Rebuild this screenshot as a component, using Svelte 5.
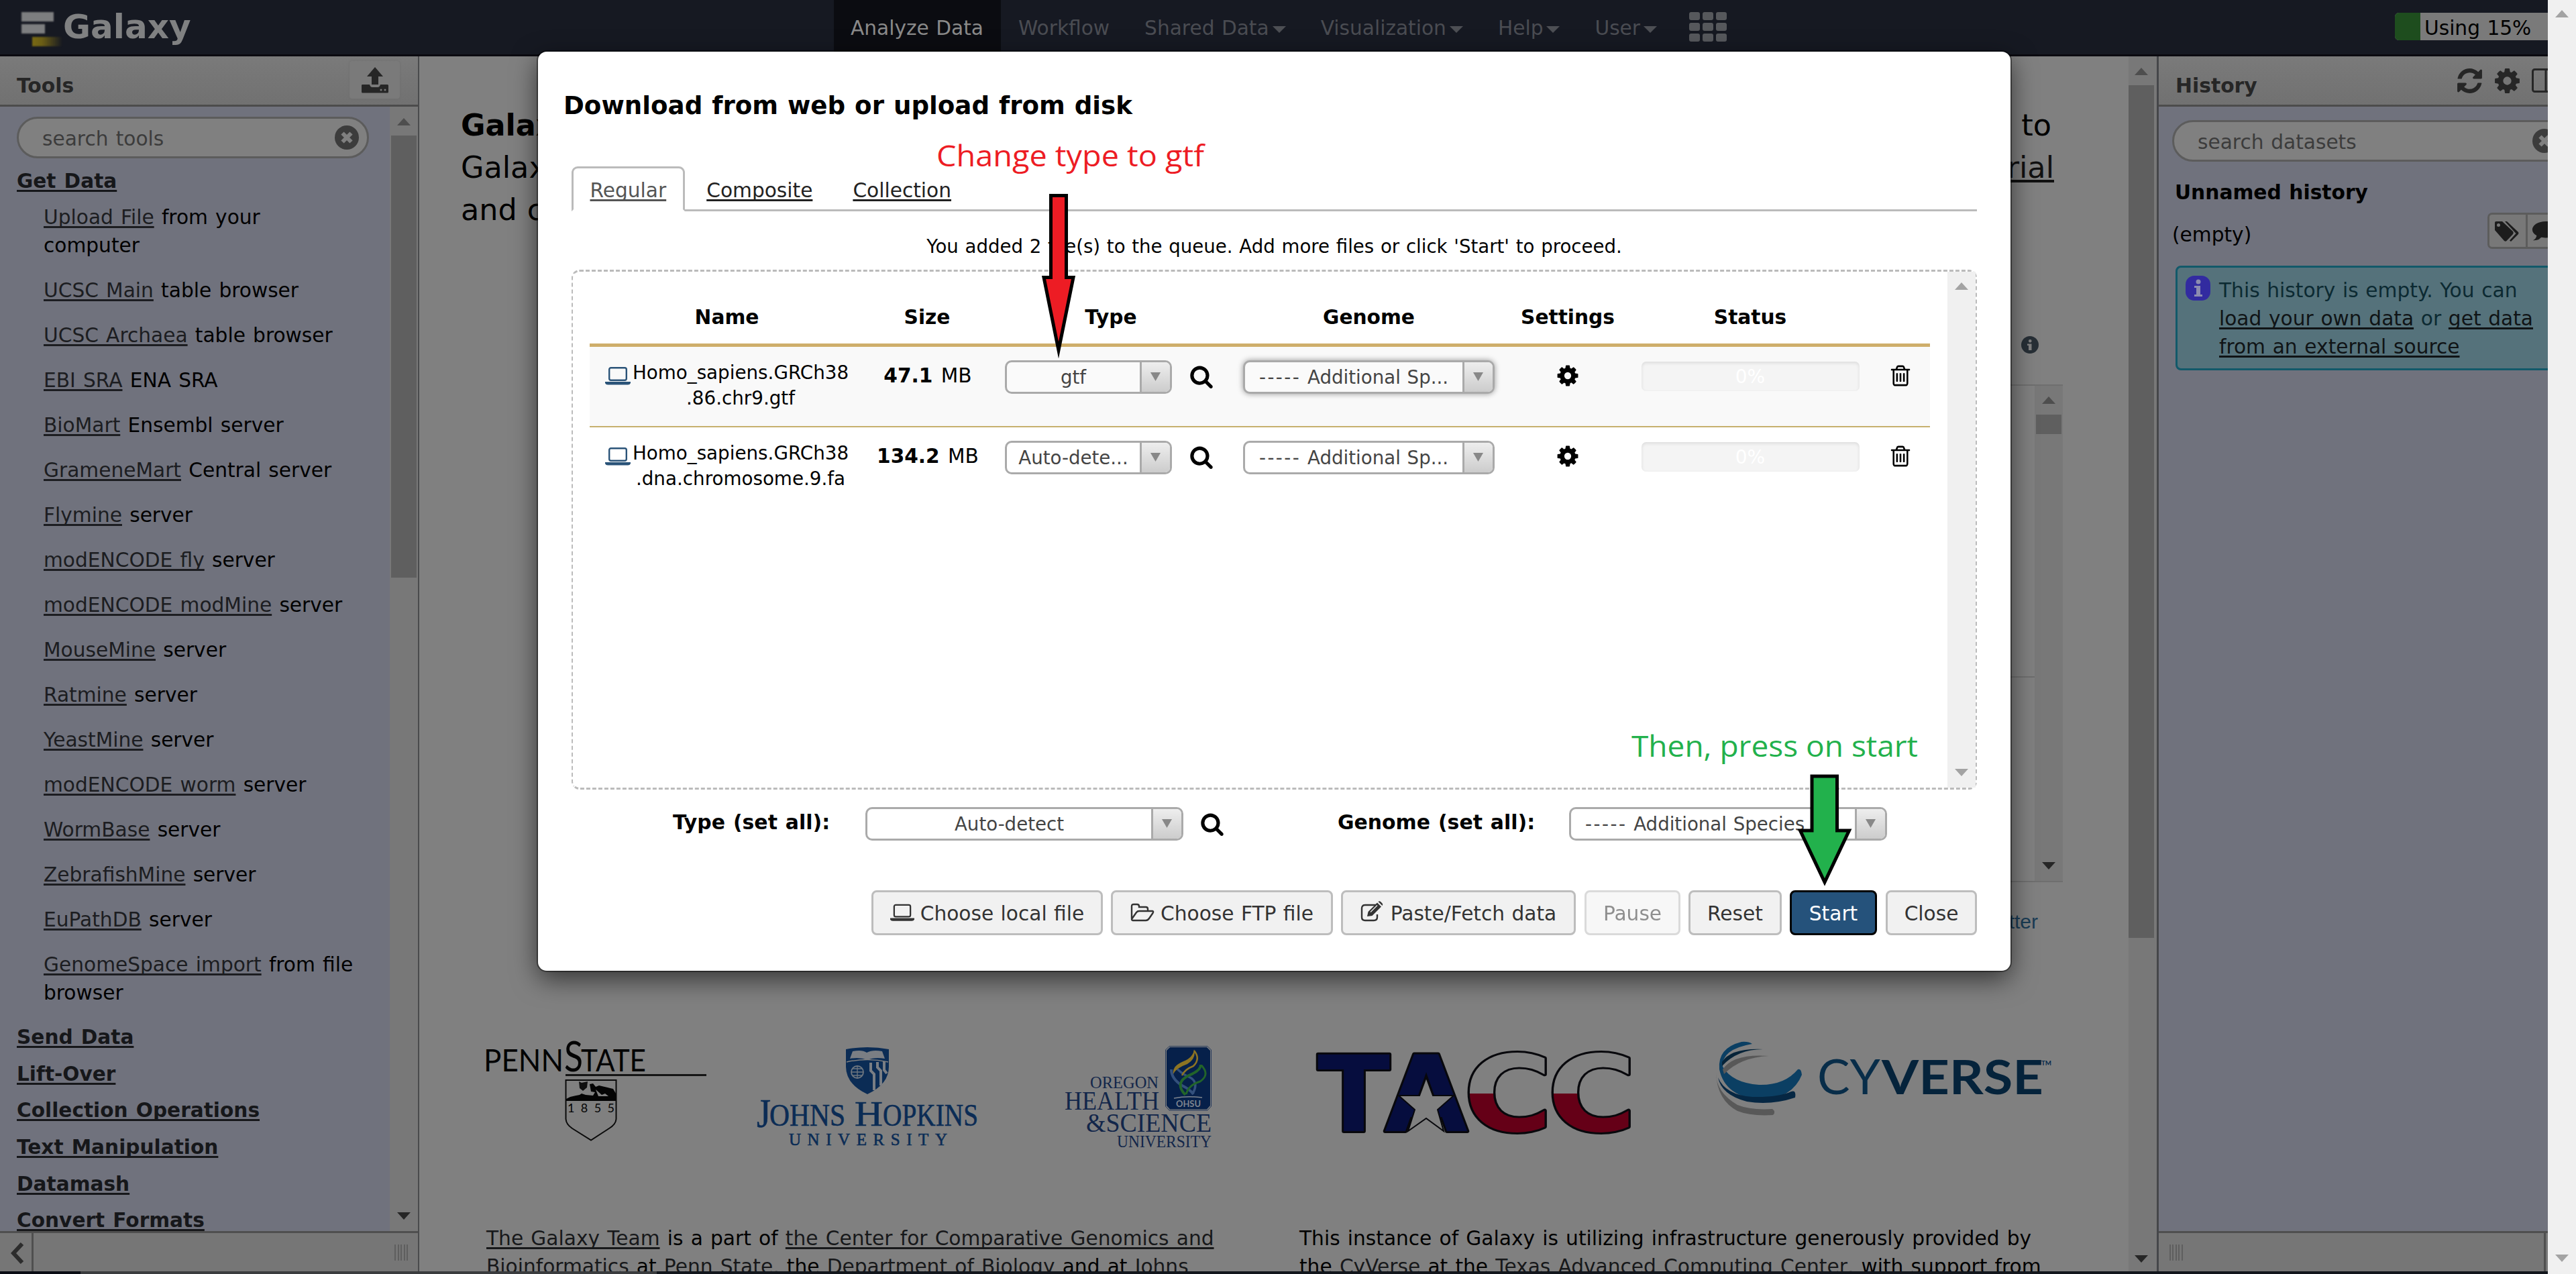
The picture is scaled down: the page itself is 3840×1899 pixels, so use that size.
<script>
  const tools = [
    ['Upload File', 'from your computer'],
    ['UCSC Main', 'table browser'],
    ['UCSC Archaea', 'table browser'],
    ['EBI SRA', 'ENA SRA'],
    ['BioMart', 'Ensembl server'],
    ['GrameneMart', 'Central server'],
    ['Flymine', 'server'],
    ['modENCODE fly', 'server'],
    ['modENCODE modMine', 'server'],
    ['MouseMine', 'server'],
    ['Ratmine', 'server'],
    ['YeastMine', 'server'],
    ['modENCODE worm', 'server'],
    ['WormBase', 'server'],
    ['ZebrafishMine', 'server'],
    ['EuPathDB', 'server'],
    ['GenomeSpace import', 'from file browser'],
  ];
  const sections = ['Send Data', 'Lift-Over', 'Collection Operations', 'Text Manipulation', 'Datamash', 'Convert Formats'];
  const menus = ['Shared Data', 'Visualization', 'Help', 'User'];
  const files = [
    { lines: ['Homo_sapiens.GRCh38', '.86.chr9.gtf'], size: '47.1', type: 'gtf', active: true },
    { lines: ['Homo_sapiens.GRCh38', '.dna.chromosome.9.fa'], size: '134.2', type: 'Auto-dete...', active: false },
  ];
  const paths = {
    search: 'M1216 832q0-185-131.5-316.5t-316.5-131.5-316.5 131.5-131.5 316.5 131.5 316.5 316.5 131.5 316.5-131.5 131.5-316.5zm512 832q0 52-38 90t-90 38q-54 0-90-38l-343-342q-179 124-399 124-143 0-273.5-55.5t-225-150-150-225-55.5-273.5 55.5-273.5 150-225 225-150 273.5-55.5 273.5 55.5 225 150 150 225 55.5 273.5q0 220-124 399l343 343q37 37 37 90z',
    cog: 'M1152 896q0-106-75-181t-181-75-181 75-75 181 75 181 181 75 181-75 75-181zm512-109v222q0 12-8 23t-20 13l-185 28q-19 54-39 91 35 50 107 138 10 12 10 25t-9 23q-27 37-99 108t-94 71q-12 0-26-9l-138-108q-44 23-91 38-16 136-29 186-7 28-36 28h-222q-14 0-24.5-8.5t-11.5-21.5l-28-184q-49-16-90-37l-141 107q-10 9-25 9-14 0-25-11-126-114-165-168-7-10-7-23 0-12 8-23 15-21 51-66.5t54-70.5q-27-50-41-99l-183-27q-13-2-21-12.5t-8-23.5v-222q0-12 8-23t19-13l186-28q14-46 39-92-40-57-107-138-10-12-10-24 0-10 9-23 26-36 98.5-107.5t94.500-71.500q13 0 26 10l138 107q44-23 91-38 16-136 29-186 7-28 36-28h222q14 0 24.500 8.500t11.500 21.500l28 184q49 16 90 37l142-107q9-9 24-9 13 0 25 10 129 119 165 170 7 8 7 22 0 12-8 23-15 21-51 66.500t-54 70.500q26 50 41 98l183 28q13 2 21 12.500t8 23.500z',
    trash: 'M704 736v576q0 14-9 23t-23 9h-64q-14 0-23-9t-9-23v-576q0-14 9-23t23-9h64q14 0 23 9t9 23zm256 0v576q0 14-9 23t-23 9h-64q-14 0-23-9t-9-23v-576q0-14 9-23t23-9h64q14 0 23 9t9 23zm256 0v576q0 14-9 23t-23 9h-64q-14 0-23-9t-9-23v-576q0-14 9-23t23-9h64q14 0 23 9t9 23zm128 724v-948h-896v948q0 22 7 40.500t14.500 27 10.500 8.500h832q3 0 10.500-8.500t14.500-27 7-40.500zm-672-1076h448l-48-117q-7-9-17-11h-317q-10 2-17 11zm928 32v64q0 14-9 23t-23 9h-96v948q0 83-47 143.500t-113 60.500h-832q-66 0-113-58.500t-47-141.500v-952h-96q-14 0-23-9t-9-23v-64q0-14 9-23t23-9h309l70-167q15-37 54-63t79-26h320q40 0 79 26t54 63l70 167h309q14 0 23 9t9 23z',
    refresh: 'M1639 1056q0 5-1 7-64 268-268 434.500t-478 166.500q-146 0-282.500-55t-243.500-157l-129 129q-19 19-45 19t-45-19-19-45v-448q0-26 19-45t45-19h448q26 0 45 19t19 45-19 45l-137 137q71 66 161 102t187 36q134 0 250-65t186-179q11-17 53-117 8-23 30-23h192q13 0 22.500 9.500t9.500 22.500zm25-800v448q0 26-19 45t-45 19h-448q-26 0-45-19t-19-45 19-45l138-138q-148-137-349-137-134 0-250 65t-186 179q-11 17-53 117-8 23-30 23h-199q-13 0-22.500-9.500t-9.500-22.500v-7q65-268 270-434.500t480-166.500q146 0 284 55.500t245 156.500l130-129q19-19 45-19t45 19 19 45z',
  };
</script>

{#snippet icon(name)}
  <svg class="fa {name}" viewBox="0 0 1792 1792"><path d={paths[name]} fill="currentColor" /></svg>
{/snippet}

{#snippet laptop()}
  <svg class="laptop" viewBox="0 0 38 28">
    <rect x="6.2" y="2.2" width="25.600" height="18.600" rx="2.500" fill="none" stroke="currentColor" stroke-width="2.400" />
    <path d="M0 23H38V25Q37 27.500 34 27.500H4Q1 27.500 0 25Z" fill="currentColor" />
  </svg>
{/snippet}

{#snippet clear()}
  <svg class="clear" viewBox="0 0 36 36">
    <circle cx="18" cy="18" r="18" fill="#3c3c3c" />
    <path d="M11.500 11.500L24.500 24.500M24.500 11.500L11.500 24.500" stroke="#808080" stroke-width="6" />
  </svg>
{/snippet}

{#snippet select(text, cls, dashes = '')}
  <div class="select {cls}">
    <span class="value">{#if dashes}<span class="dashes">{dashes}</span>{' '}{/if}{text}</span>
    <span class="drop"><svg viewBox="0 0 15 13"><path d="M0 0H15L7.500 13Z" fill="#888" /></svg></span>
  </div>
{/snippet}

{#snippet arrow(cls)}
  <svg class="arrow {cls}" viewBox="0 0 20 11"><path d="M0 11L10 0L20 11Z" fill="currentColor" /></svg>
{/snippet}

<div class="page">
  <div class="app">
    <header>
      <div class="brand">
        <svg class="mark" viewBox="0 0 66 54">
          <defs><linearGradient id="gold"><stop offset="0" stop-color="#7a6a14" /><stop offset=".35" stop-color="#6a5d16" /><stop offset="1" stop-color="#6a5d16" stop-opacity="0" /></linearGradient></defs>
          <rect x="2" y="2" width="48" height="14" fill="#7d7e80" />
          <rect x="2" y="20" width="35" height="14" fill="#7d7e80" />
          <rect x="18" y="39" width="45" height="14" fill="url(#gold)" />
        </svg>
        <b>Galaxy</b>
      </div>
      <nav>
        <span class="item on">Analyze Data</span>
        <span class="item">Workflow</span>
        {#each menus as m}
          <span class="item">{m}<i class="caret"></i></span>
        {/each}
        <span class="dots">{#each Array(9) as _}<i></i>{/each}</span>
      </nav>
      <div class="quota"><i></i><span>Using 15%</span></div>
    </header>

    <div class="main">
      <aside class="left">
        <div class="phead">
          <b>Tools</b>
          <span class="up">
            <svg viewBox="0 0 40 39"><path d="M20 0L32 14H25V26H15V14H8Z" fill="#262626" /><path d="M0 27Q0 26 1.500 26H12Q13 30 16 30H24Q27 30 28 26H38.500Q40 26 40 27.500V37Q40 38.500 38.500 38.500H1.500Q0 38.500 0 37Z" fill="#262626" /><circle cx="29" cy="34" r="1.500" fill="#7a7a7a" /><circle cx="35" cy="34" r="1.500" fill="#7a7a7a" /></svg>
          </span>
        </div>
        <div class="pbody">
          <div class="tools">
            <div class="field"><span>search tools</span>{@render clear()}</div>
            <b class="sec"><u>Get Data</u></b>
            <div class="list">
              {#each tools as [name, rest]}
                <p><u>{name}</u> {rest}</p>
              {/each}
            </div>
            {#each sections as s}
              <b class="sec"><u>{s}</u></b>
            {/each}
          </div>
          <div class="bar side">{@render arrow('u')}<i></i>{@render arrow('d')}</div>
        </div>
        <div class="pfoot">
          <span class="chev"><svg viewBox="0 0 20 32"><path d="M17 2L4 16L17 30" fill="none" stroke="#2c2c2c" stroke-width="6" /></svg></span>
          <span class="grip"></span>
        </div>
      </aside>

      <section class="center">
        <div class="content">
          <div class="intro">
            <p><span><b>Galaxy</b> is an open source, web-based platform for data intensive biomedical research. If you are new</span><span>to</span></p>
            <p><span>Galaxy start here or consult our help resources. You can install your own Galaxy by following the</span><u>tutorial</u></p>
            <p><span>and choose from thousands of tools from the Tool Shed.</span></p>
          </div>
          <div class="feed">
            <div class="feedhead">
              <svg viewBox="0 0 26 26"><circle cx="13" cy="13" r="13" fill="#272f36" /><rect x="11" y="5" width="4.500" height="4.500" rx="2" fill="#808080" /><path d="M9 11.500H15.500V21H11V14H9Z" fill="#808080" /></svg>
            </div>
            <div class="feedbox">
              <div class="posts"><div></div><div></div></div>
              <div class="bar inner">{@render arrow('u')}<i></i>{@render arrow('d')}</div>
            </div>
            <div class="feedfoot">View on Twitter</div>
          </div>
          <div class="logos">
            <svg class="psu" viewBox="725 1545 335 175">
              <g font-family="Lato, sans-serif" fill="#040404">
                <text x="721" y="1597" font-size="47" textLength="119" lengthAdjust="spacingAndGlyphs">PENN</text>
                <text x="841" y="1597" font-size="61" textLength="28" lengthAdjust="spacingAndGlyphs">S</text>
                <text x="866" y="1597" font-size="47" textLength="97" lengthAdjust="spacingAndGlyphs">TATE</text>
                <text x="846" y="1658" font-size="18" textLength="70">1855</text>
              </g>
              <path d="M843 1602.500H1053" stroke="#151515" stroke-width="3" />
              <path d="M843.500 1610H918.500V1668Q918 1676 908 1682L881 1699.500L853 1682Q844 1676 843.500 1668Z" fill="none" stroke="#0a0a0a" stroke-width="2" />
              <path d="M844 1641V1638L850 1635Q858 1633 864 1632L867 1630L873 1632L884 1633L887 1628L881 1627L879 1616L884 1615L888 1620L893 1618Q906 1621 914 1623L918 1630V1641Z" fill="#040404" />
              <path d="M863 1612L867 1614L876 1612L875 1621L869 1626L864 1622Z" fill="#101010" />
              <path d="M888 1624L897 1632L902 1630L907 1634L892 1634Z" fill="#808080" />
            </svg>
            <svg class="jhu" viewBox="1125 1545 335 175">
              <path d="M1261 1564Q1293 1558 1325 1564V1590Q1325 1616 1293 1631Q1261 1616 1261 1590Z" fill="#0b2c55" />
              <path d="M1271 1567Q1285 1564 1292 1569Q1301 1564 1315 1567L1319 1578Q1304 1575 1293 1580Q1281 1575 1267 1578Z" fill="#7a7e84" />
              <path d="M1262 1583Q1293 1576 1324 1583" fill="none" stroke="#808080" stroke-width="1.500" />
              <circle cx="1278" cy="1598" r="9" fill="none" stroke="#6f7780" stroke-width="1.800" />
              <path d="M1278 1589V1607M1269 1598H1287M1271 1593H1285M1271 1603H1285" stroke="#6f7780" stroke-width="1.300" />
              <path d="M1298 1584V1596L1303 1601V1625M1308 1583V1591L1313 1596V1618M1318 1582V1595L1322 1600" fill="none" stroke="#7a7e84" stroke-width="4" />
              <g font-family="Liberation Serif, serif" fill="#0b2c55" stroke="#0b2c55" stroke-width=".6">
                <text x="1128" y="1680" font-size="62" textLength="21" lengthAdjust="spacingAndGlyphs">J</text>
                <text x="1147" y="1678" font-size="46" textLength="113" lengthAdjust="spacingAndGlyphs">OHNS</text>
                <text x="1274" y="1678" font-size="53" textLength="42" lengthAdjust="spacingAndGlyphs">H</text>
                <text x="1316" y="1678" font-size="46" textLength="142" lengthAdjust="spacingAndGlyphs">OPKINS</text>
                <text x="1176" y="1707" font-size="25" textLength="236">UNIVERSITY</text>
              </g>
            </svg>
            <svg class="ohsu" viewBox="1585 1545 225 175">
              <path d="M1743 1559.500H1800L1805.500 1565V1649L1800 1655H1743L1737.500 1649V1565Z" fill="none" stroke="#25395c" stroke-width="1" />
              <path d="M1744 1561H1799L1804 1566V1648L1799 1653.500H1744L1739 1648V1566Z" fill="#06204a" />
              <path d="M1746 1594Q1746 1608 1762 1618Q1774 1624 1779 1631" fill="none" stroke="#33507c" stroke-width="4" />
              <path d="M1752 1590Q1760 1600 1772 1605Q1788 1612 1778 1630" fill="none" stroke="#33507c" stroke-width="3.500" />
              <path d="M1780 1564Q1779 1576 1764 1582Q1747 1589 1749 1601Q1753 1592 1770 1586Q1784 1577 1780 1564Z" fill="#8d7423" />
              <path d="M1780 1566Q1790 1578 1779 1589Q1766 1594 1762 1603" fill="none" stroke="#8d7423" stroke-width="2.500" />
              <path d="M1790 1587Q1790 1596 1772 1603Q1750 1614 1767 1632" fill="none" stroke="#22642a" stroke-width="4" />
              <path d="M1791 1588Q1804 1602 1789 1612Q1772 1617 1768 1631" fill="none" stroke="#22642a" stroke-width="3" />
              <path d="M1750 1637Q1770 1633 1792 1636" fill="none" stroke="#7e858f" stroke-width="1.500" />
              <text x="1753" y="1650" font-family="Lato, sans-serif" font-weight="bold" font-size="14" textLength="37" lengthAdjust="spacingAndGlyphs" fill="#7e858f">OHSU</text>
              <g font-family="Liberation Serif, serif" fill="#12264a">
                <text x="1625" y="1622" font-size="26" textLength="102" lengthAdjust="spacingAndGlyphs">OREGON</text>
                <text x="1587" y="1654" font-size="40" textLength="141" lengthAdjust="spacingAndGlyphs">HEALTH</text>
                <text x="1619" y="1687" font-size="40" textLength="187" lengthAdjust="spacingAndGlyphs">&amp;SCIENCE</text>
                <text x="1665" y="1709.500" font-size="25" textLength="141" lengthAdjust="spacingAndGlyphs">UNIVERSITY</text>
              </g>
            </svg>
            <svg class="tacc" viewBox="1955 1545 480 175">
              <defs><linearGradient id="flag" gradientUnits="userSpaceOnUse" x1="0" y1="1570" x2="0" y2="1690"><stop offset=".5" stop-color="#808080" /><stop offset=".5" stop-color="#650017" /></linearGradient></defs>
              <g font-family="DejaVu Sans, sans-serif" font-weight="bold" font-size="157" stroke="#08080c" stroke-width="6" paint-order="stroke" stroke-linejoin="round">
                <text x="1964" y="1686" textLength="108" lengthAdjust="spacingAndGlyphs" fill="#060d3e">T</text>
                <text x="2064" y="1686" textLength="124" lengthAdjust="spacingAndGlyphs" fill="#060d3e">A</text>
                <text x="2182" y="1686" textLength="132" lengthAdjust="spacingAndGlyphs" fill="url(#flag)">C</text>
                <text x="2307" y="1686" textLength="132" lengthAdjust="spacingAndGlyphs" fill="url(#flag)">C</text>
              </g>
              <path d="M2126 1606L2136 1633L2167 1633L2143 1654L2152 1686L2126 1667L2099 1686L2109 1654L2085 1633L2116 1633Z" fill="#808080" stroke="#08080c" stroke-width="2" />
            </svg>
            <svg class="cyv" viewBox="2550 1545 515 175">
              <path d="M2596 1553Q2560 1562 2563 1594Q2572 1636 2626 1639Q2672 1637 2686 1602Q2685 1592 2680 1594Q2660 1618 2622 1617Q2582 1614 2568 1590Q2566 1564 2612 1556Q2606 1552 2596 1553Z" fill="#0b3f63" />
              <path d="M2567 1583Q2580 1562 2628 1564Q2590 1564 2567 1589Z" fill="#062338" />
              <path d="M2561 1606Q2572 1632 2612 1635Q2650 1636 2670 1627Q2678 1624 2676 1636Q2640 1648 2604 1642Q2566 1632 2561 1606Z" fill="#062743" />
              <path d="M2568 1594Q2584 1570 2637 1574Q2594 1576 2570 1601Z" fill="#585858" />
              <path d="M2558 1600Q2558 1628 2590 1647Q2610 1655 2642 1653Q2648 1657 2643 1662Q2610 1664 2590 1656Q2560 1640 2558 1600Z" fill="#585858" />
              <g font-family="Lato, sans-serif" fill="#06294a">
                <text x="2709" y="1630.500" font-size="71" textLength="94" lengthAdjust="spacingAndGlyphs" fill="#082d49">CY</text>
                <text x="2805" y="1630.500" font-size="71" font-weight="bold" textLength="241" lengthAdjust="spacingAndGlyphs" fill="#05233b">VERSE</text>
                <text x="3043" y="1588" font-size="10" font-weight="bold" textLength="15" lengthAdjust="spacingAndGlyphs">TM</text>
              </g>
            </svg>
          </div>
          <div class="credits">
            <p><u>The Galaxy Team</u> is a part of <u>the Center for Comparative Genomics and Bioinformatics</u> at <u>Penn State</u>, the <u>Department of Biology</u> and at <u>Johns</u></p>
            <p>This instance of Galaxy is utilizing infrastructure generously provided by the <u>CyVerse</u> at the <u>Texas Advanced Computing Center</u>, with support from</p>
          </div>
        </div>
        <div class="bar mid">{@render arrow('u')}<i></i>{@render arrow('d')}</div>
      </section>

      <aside class="right">
        <div class="phead">
          <b>History</b>
          <span class="acts">{@render icon('refresh')}{@render icon('cog')}<svg class="cols" viewBox="0 0 42 36"><rect x="1.500" y="1.500" width="39" height="33" rx="3" fill="none" stroke="#262626" stroke-width="3" /><path d="M21 2V34" stroke="#262626" stroke-width="3" /></svg></span>
        </div>
        <div class="hist">
          <div class="field"><span>search datasets</span>{@render clear()}</div>
          <b>Unnamed history</b>
          <div class="hrow">
            <span>(empty)</span>
            <span class="btns">
              <i><svg viewBox="0 0 38 32"><path d="M1 3Q1 1 3 1H12L28 16Q29.500 18 28 20L18.500 30Q17 31.500 15 30L1 14Z" fill="#1c1c1c" /><circle cx="6.500" cy="6.500" r="2.500" fill="#787878" /><path d="M16 1H19L36 17Q37 18.500 36 20L25 31L23 29.500L32.500 19Z" fill="#1c1c1c" /></svg></i>
              <i><svg viewBox="0 0 44 34"><ellipse cx="22" cy="14" rx="21" ry="13" fill="#1c1c1c" /><path d="M8 22Q8 28 2 31Q12 32 17 24Z" fill="#1c1c1c" /></svg></i>
            </span>
          </div>
          <div class="info">
            <svg viewBox="0 0 37 37"><rect width="37" height="37" rx="13" fill="#322ba0" /><circle cx="19" cy="9" r="3.500" fill="#8c8cb0" /><path d="M13 15H22V28H25V31H13V28H16V18H13Z" fill="#8c8cb0" /></svg>
            <p>This history is empty. You can <br /><u>load your own data</u> or <u>get data</u><br /><u>from an external source</u></p>
          </div>
        </div>
        <div class="pfoot"><span class="grip"></span><span class="edge"></span></div>
      </aside>
    </div>
    <div class="taskbar"></div>
  </div>
  <div class="bar win">{@render arrow('u')}{@render arrow('d')}</div>

  <div class="modal">
    <h1>Download from web or upload from disk</h1>
    <div class="tabs"><span class="tab on"><u>Regular</u></span><span class="tab"><u>Composite</u></span><span class="tab"><u>Collection</u></span></div>
    <div class="msg">You added 2 file(s) to the queue. Add more files or click 'Start' to proceed.</div>
    <div class="queue">
      <div class="table">
        <div class="row th"><b>Name</b><b>Size</b><b>Type</b><b>Genome</b><b>Settings</b><b>Status</b></div>
        {#each files as f}
          <div class="row td" class:odd={f.active}>
            <div class="name">{@render laptop()}<span>{f.lines[0]}<br />{f.lines[1]}</span></div>
            <div class="cell size"><b>{f.size}</b>&nbsp;MB</div>
            <div class="cell type">{@render select(f.type, 'short')}{@render icon('search')}</div>
            <div class="cell">{@render select('Additional Sp...', f.active ? 'medium glow' : 'medium', '-----')}</div>
            <div class="cell lift">{@render icon('cog')}</div>
            <div class="cell"><div class="progress">0%</div></div>
            <div class="cell lift">{@render icon('trash')}</div>
          </div>
        {/each}
      </div>
      <div class="bar box">{@render arrow('u')}{@render arrow('d')}</div>
    </div>
    <div class="setall">
      <b class="lt">Type (set all):</b>{@render select('Auto-detect', 'wide')}{@render icon('search')}
      <b class="lg">Genome (set all):</b>{@render select('Additional Species', 'wide species', '-----')}
    </div>
    <div class="buttons">
      <span class="btn local">{@render laptop()}Choose local file</span>
      <span class="btn ftp"><svg class="folder" viewBox="0 0 36 28"><path d="M2 23V5Q2 2 5 2H10Q13 2 13 5V6H23Q26 6 26 9V12M2 24L9 14Q10.500 12 13 12H33Q35 12.500 33.500 15L28 23Q26 26 23 26H4Q2 26 2 24Z" fill="none" stroke="currentColor" stroke-width="2.400" /></svg>Choose FTP file</span>
      <span class="btn paste"><svg class="edit" viewBox="0 0 36 28"><path d="M24 3H7Q2 3 2 8V21Q2 26 7 26H20Q25 26 25 21V17" fill="none" stroke="currentColor" stroke-width="2.400" /><path d="M10 20L11.500 13L25 -.5L31 5.500L17.500 19Z" fill="currentColor" /><path d="M26.500 -2Q28 -3.500 30 -2L32.500 .5Q34 2.500 32.500 4Z" fill="currentColor" /><path d="M15 13.500L25 3.500" stroke="#f1f1f1" stroke-width="1.300" /></svg>Paste/Fetch data</span>
      <span class="btn pause">Pause</span>
      <span class="btn reset">Reset</span>
      <span class="btn start">Start</span>
      <span class="btn close">Close</span>
    </div>
  </div>

  <svg class="notes" viewBox="0 0 3840 1899">
    <g stroke="#000" stroke-width="5" stroke-miterlimit="20">
      <path d="M1566.500 291.500H1589.500V413.500H1600L1578 522L1556 413.500H1566.500Z" fill="#ed1c24" />
      <path d="M2701 1157H2738.500V1238H2756.500L2720 1315L2683.500 1238H2701Z" fill="#22b14c" />
    </g>
    <g font-family="Open Sans, Noto Sans, sans-serif" font-size="44">
      <text x="1396" y="248" textLength="399" lengthAdjust="spacingAndGlyphs" fill="#ed1c24">Change type to gtf</text>
      <text x="2432" y="1128" textLength="427" lengthAdjust="spacingAndGlyphs" fill="#22b14c">Then, press on start</text>
    </g>
  </svg>
</div>

<style>
  :global(body) { margin: 0; }
  .page, .page * { box-sizing: border-box; }
  .page {
    position: relative; display: flex; width: 3840px; height: 1899px; overflow: hidden;
    font: 29.650px/42px Verdana, 'DejaVu Sans', sans-serif; word-spacing: 1.800px; color: #000; background: #808080;
  }
  svg { display: block; flex: none; word-spacing: 0; }
  p, h1 { margin: 0; }
  u { text-decoration-thickness: 3px; text-underline-offset: 3px; text-decoration-skip-ink: none; }
  .fa { width: 36px; height: 36px; }
  .app { width: 3798px; display: flex; flex-direction: column; overflow: hidden; }

  header { height: 84px; flex: none; display: flex; background: #161922; border-bottom: 3px solid #0b0a10; word-spacing: 1px; }
  .brand { width: 1243px; display: flex; color: #808182; padding-left: 30px; }
  .brand b { font-size: 50px; line-height: 81px; margin-left: -2px; }
  .mark { width: 66px; height: 54px; margin-top: 16px; filter: blur(1px); }
  nav { display: flex; height: 81px; }
  .item { padding: 2px 26px 0; line-height: 80px; color: #4a4c52; display: flex; align-items: center; white-space: nowrap; }
  .item.on { background: #0b0c11; color: #8a8a8a; padding-left: 25px; }
  .caret { margin-left: 5px; border: 10px solid transparent; border-top: 10px solid #4d4f54; border-bottom: 0; margin-top: 5px; }
  .dots { margin: 18px 0 0 22px; width: 56px; height: 44px; display: grid; grid-template-columns: repeat(3, 16px); justify-content: space-between; align-content: space-between; grid-auto-rows: 12px; }
  .dots i { background: #56585c; border-radius: 3px; }
  .quota { margin: 19px 0 0 auto; width: 228px; height: 41px; display: flex; background: #7a7a7a; border-radius: 6px 0 0 6px; overflow: hidden; }
  .quota i { width: 38px; background: #1e4d1e; margin-right: 6px; }
  .quota span { line-height: 45px; }

  .main { flex: 1; display: flex; min-height: 0; }
  .left { width: 625px; border-right: 2px solid #4a4b4d; }
  .left, .right { display: flex; flex-direction: column; flex: none; }
  .phead { height: 75px; flex: none; display: flex; align-items: center; justify-content: space-between; background: linear-gradient(#7a7a7a, #717171); border-bottom: 3px solid #4c4c4c; color: #262626; padding: 15px 27px 0 25px; }
  .phead b { font-size: 29.800px; }
  .up { width: 75px; height: 56px; margin-top: -18px; background: #7a7a7a; box-shadow: 0 0 3px #6c6c6c; border-radius: 4px; padding: 9px 0 0 18px; }
  .up svg { width: 40px; height: 39px; }
  .pbody { flex: 1; min-height: 0; display: flex; background: #70727d; }
  .tools { flex: 1; padding: 15px 31px 0 25px; overflow: hidden; }
  .field { height: 62px; border: 3px solid #5c5c5c; border-radius: 31px; background: #808080; color: #3c3c3c; display: flex; align-items: center; justify-content: space-between; padding: 3px 12px 0 35px; }
  .clear { width: 36px; height: 36px; margin-top: -4px; }
  .sec { display: block; margin-top: 12.600px; font-size: 29.600px; color: #16171a; }
  .list { padding: 12px 18px 12px 40px; }
  .list p { margin-bottom: 25px; }
  .list p:last-child { margin-bottom: 0; }
  .list u { color: #1c1d21; }
  .pfoot { height: 60px; flex: none; display: flex; justify-content: space-between; align-items: center; background: #767676; border-top: 3px solid #4f4f4f; padding-right: 15px; }
  .chev { width: 50px; height: 57px; border-right: 3px solid #4f4f4f; padding: 14px 0 0 16px; }
  .chev svg { width: 20px; height: 32px; }
  .grip { width: 20px; height: 24px; background: repeating-linear-gradient(90deg, #5e5e5e 0 2px, #767676 2px 4.500px); }

  .bar { flex: none; display: flex; flex-direction: column; align-items: center; background: #787878; color: #4e4e4e; }
  .bar i { display: block; background: #5f5f5f; }
  .arrow { width: 20px; height: 11px; }
  .arrow.d { margin-top: auto; transform: rotate(180deg); color: #262626; }
  .side { width: 42px; padding: 17px 0 17px; }
  .side i { width: 38px; height: 659px; margin-top: 15px; }
  .mid { width: 45px; padding: 17px 4px 13px 0; border-right: 3px solid #46474a; }
  .mid i { width: 38px; height: 1271px; margin-top: 15px; }
  .inner { width: 42px; padding: 16px 0 17px; }
  .inner i { width: 38px; height: 29px; margin-top: 16px; }
  .win { width: 42px; background: #f0f0f0; color: #a3a3a3; padding: 15px 0 18px; }
  .win .d, .box .d { color: #a3a3a3; }
  .box { width: 42px; background: #f0f0f0; color: #a3a3a3; padding: 16px 0 17px; }

  .center { flex: 1; display: flex; min-width: 0; }
  .content { flex: 1; padding: 71px 0 0 63px; display: flex; flex-direction: column; overflow: hidden; min-width: 0; }
  .intro { width: 2375px; flex: none; font-size: 44.500px; line-height: 63px; height: 189px; word-spacing: 1px; margin-left: -1px; }
  .intro p { display: flex; justify-content: space-between; white-space: nowrap; }
  .intro p:first-child { padding-right: 4px; }
  .intro u { color: #111; text-decoration-thickness: 4px; }
  .feed { flex: none; align-self: flex-end; width: 700px; margin-right: 98px; height: 1201px; padding-top: 154px; }
  .feedhead { height: 75px; display: flex; justify-content: flex-end; padding: 3px 36px 0 0; }
  .feedhead svg { width: 26px; height: 26px; }
  .feedbox { height: 742px; border: solid #6f6f6f; border-width: 2px 0; display: flex; }
  .posts { flex: 1; }
  .posts div:first-child { height: 435px; border-bottom: 2px solid #6f6f6f; }
  .feedfoot { text-align: right; padding: 38px 37px 0 0; color: #1a3c55; font-family: 'Liberation Sans', sans-serif; font-size: 30px; }
  .logos { display: flex; height: 175px; flex: none; padding-left: 37px; }
  .psu { width: 335px; } .jhu { width: 335px; margin-left: 65px; } .ohsu { width: 225px; margin-left: 125px; }
  .tacc { width: 480px; margin-left: 145px; filter: blur(.6px); } .cyv { width: 515px; margin-left: 115px; }
  .psu, .ohsu, .tacc, .jhu, .cyv { overflow: visible; }
  .credits { display: flex; flex: none; padding: 105px 0 0 37px; height: 220px; }
  .credits p { width: 1112px; margin-right: 100px; }
  .credits u { color: #17181a; }

  .right { width: 580px; background: #70727d; }
  .right .phead { width: 610px; padding-left: 25px; padding-right: 12px; }
  .acts { display: flex; align-items: center; gap: 13px; margin-top: -15px; color: #262626; }
  .acts .fa { width: 43px; height: 43px; }
  .cols { width: 42px; height: 42px; margin-left: 2px; }
  .hist { flex: 1; width: 640px; padding: 20px 0 0 20px; word-spacing: 1.300px; }
  .hist > b { display: block; margin: 25px 0 0 4px; font-size: 29.700px; }
  .hist .field { width: 600px; padding-right: 24px; }
  .hrow { display: flex; align-items: center; height: 54px; margin-top: 10px; justify-content: space-between; padding-right: 48px; }
  .hrow > span:first-child { padding-top: 10px; }
  .btns { display: flex; border: 3px solid #5c5c5c; border-radius: 7px; background: #787878; height: 54px; width: 102px; margin: 0 0 2px; }
  .btns i { width: 54px; padding: 9px 0 0 7px; flex: none; }
  .btns i + i { border-left: 3px solid #5c5c5c; padding: 9px 0 0 6px; }
  .btns svg { height: 32px; }
  .info { margin: 24px 0 0 5px; width: 580px; height: 156px; border: 3px solid #12596a; border-radius: 8px; background: #55727b; display: flex; padding: 12px 0 0 12px; gap: 13px; color: #0c2a32; white-space: nowrap; }
  .info svg { width: 37px; height: 37px; }
  .info u { color: #101416; }
  .info p { padding-top: 1px; }
  .right .pfoot { padding: 0 0 0 16px; }
  .edge { width: 6px; height: 57px; border-left: 3px solid #4f4f4f; }
  .taskbar { height: 4px; flex: none; background: linear-gradient(90deg, #0a0d14 120px, #3a3c3e 120px 979px, #12161c 979px); }

  .modal { position: absolute; left: 802px; top: 77px; width: 2195px; height: 1370px; background: #fff; border-radius: 13px; box-shadow: 0 0 0 2px rgba(0, 0, 0, .4), 0 12px 38px rgba(0, 0, 0, .6); display: flex; flex-direction: column; word-spacing: 1px; }
  h1 { font-size: 37.200px; line-height: 48px; margin: 56px 0 67px 38px; }
  .tabs { display: flex; height: 67px; flex: none; margin: 0 50px; border-bottom: 3px solid #bbb; }
  .tab { height: 67px; padding: 12px 24.500px 0; border: 3px solid transparent; margin-right: 5px; color: #222; }
  .tabs .tab.on { border-color: #bbb; border-bottom-color: #fff; border-radius: 9px 9px 0 0; color: #555; background: #fff; }
  .msg { height: 87px; flex: none; padding: 32px 0 0; text-align: center; font-size: 27.600px; }
  .queue { height: 775px; flex: none; margin: 0 50px; border: 3px dashed #bbb; border-left-width: 2px; border-right-width: 2px; border-radius: 12px; display: flex; justify-content: space-between; }
  .table { width: 1998px; margin-left: 25px; }
  .row { display: grid; grid-template-columns: 409px 188px 360px 409px 184px 360px 88px; }
  .th { height: 112px; padding-top: 47px; border-bottom: 5px solid #ceae6a; text-align: center; }
  .td { height: 120px; font-size: 29.600px; }
  .td.odd { background: #f9f9f9; border-bottom: 2px solid #c6b06e; }
  .name { display: flex; justify-content: center; padding-top: 20px; gap: 3px; font-size: 27.750px; line-height: 38px; text-align: center; }
  .name .laptop { color: #2a5378; margin-top: 9px; }
  .laptop { width: 38px; height: 28px; }
  .cell { height: 50px; margin-top: 20px; display: flex; align-items: center; justify-content: center; }
  .size { margin-top: 18px; padding-left: 2px; word-spacing: 3px; }
  .type { justify-content: flex-start; padding-left: 22px; }
  .type .fa { margin: -2px 0 0 26px; }
  .lift { margin-top: 18px; }
  .select { height: 50px; flex: none; border: 3px solid #aaa; border-radius: 10px; display: flex; color: #444; background: #fff; overflow: hidden; font-size: 27.650px; }
  .odd .select { background: #fafafa; }
  .value { flex: 1; text-align: center; line-height: 45px; white-space: nowrap; }
  .dashes { letter-spacing: 2.500px; }
  .drop { width: 45px; border-left: 3px solid #aaa; background: linear-gradient(#eee, #ccc); padding: 15px 0 0 13px; }
  .drop svg { width: 15px; height: 13px; }
  .short { width: 249px; } .medium { width: 375px; } .wide { width: 474px; }
  .glow { box-shadow: 0 0 9px rgba(0, 0, 0, .4); }
  .species .value { text-align: left; padding-left: 21px; }
  .progress { width: 325px; height: 44px; margin-top: -2px; background: #f4f4f4; border-radius: 7px; box-shadow: inset 0 2px 5px rgba(0, 0, 0, .1); color: #fff; text-align: center; font-size: 28px; line-height: 45px; }
  .setall { height: 104px; flex: none; display: flex; align-items: center; padding: 0 0 2px 201px; }
  .setall b { margin-top: -5px; flex: none; white-space: nowrap; font-size: 29.900px; word-spacing: 1.500px; }
  .lt { width: 287px; }
  .lg { width: 345px; margin-left: 169px; }
  .setall .fa { margin-left: 25px; }
  .buttons { margin: 46px 50px 0 0; display: flex; justify-content: flex-end; gap: 12px; }
  .btn { height: 67px; border: 3px solid #bdbdbd; border-radius: 8px; background: #f1f1f1; color: #333; display: flex; align-items: center; justify-content: center; padding-top: 3px; white-space: nowrap; }
  .local { width: 345px; } .ftp { width: 331px; } .paste { width: 350px; margin-right: 1px; } .pause { width: 143px; opacity: .55; }
  .reset { width: 139px; } .start { width: 130px; margin-right: 1px; background: #25527b; border-color: #000; color: #fff; } .close { width: 136px; }
  .btn svg { width: 36px; height: 28px; margin: -5px 9px 0 0; overflow: visible; }
  .notes { position: absolute; left: 0; top: 0; width: 3840px; height: 1899px; }
</style>
